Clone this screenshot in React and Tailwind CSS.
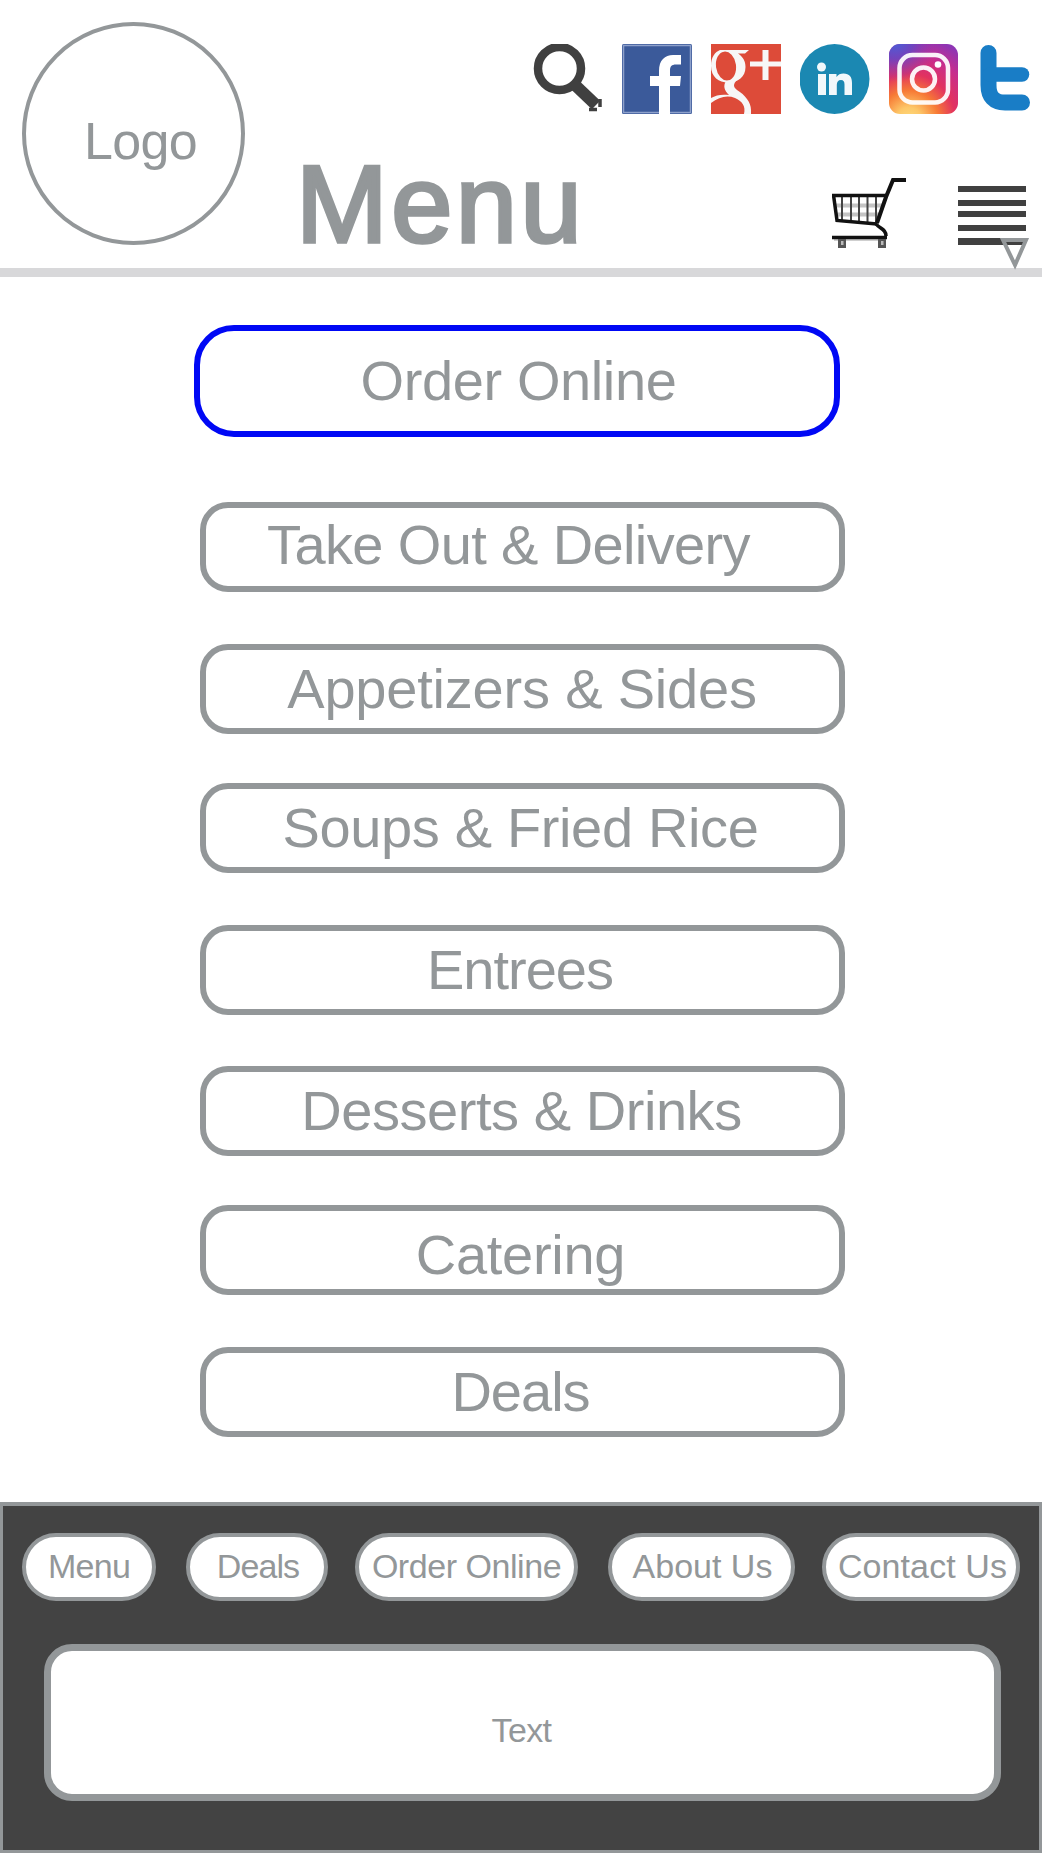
import clsx from "clsx";

const menuItems = [
  { label: "Take Out & Delivery", box: "mt-[65px]", text: "-translate-x-[14px] -translate-y-[2px] tracking-[-0.63px]" },
  { label: "Appetizers & Sides", box: "mt-[52px]", text: "-translate-x-[0.5px] tracking-[-0.2px]" },
  { label: "Soups & Fried Rice", box: "mt-[49px]", text: "-translate-x-[2px] tracking-[-0.35px]" },
  { label: "Entrees", box: "mt-[52px]", text: "-translate-x-[2.5px] tracking-[-1px]" },
  { label: "Desserts & Drinks", box: "mt-[51px]", text: "-translate-x-px tracking-[-0.45px]" },
  { label: "Catering", box: "mt-[49px]", text: "-translate-x-[2px] translate-y-[5px] tracking-[-0.3px]" },
  { label: "Deals", box: "mt-[52px]", text: "-translate-x-[2px] tracking-[-1px]" },
];

const footerLinks = [
  { label: "Menu", box: "w-[134px]", text: "tracking-[-0.7px]" },
  { label: "Deals", box: "ml-[30px] w-[142px]", text: "translate-x-px tracking-[-0.9px]" },
  { label: "Order Online", box: "ml-[27px] w-[223px]", text: "tracking-[-0.45px]" },
  { label: "About Us", box: "ml-[30px] w-[187px]", text: "translate-x-px" },
  { label: "Contact Us", box: "ml-[27px] w-[198px]", text: "translate-x-[1.5px] tracking-[0.1px]" },
];

function SearchIcon() {
  return (
    <svg viewBox="0 0 70 70" className="size-[70px]" fill="none" stroke="#404040">
      <circle cx="26.5" cy="24.5" r="21.5" strokeWidth="8.5" />
      <path d="M42 41 L63 61" strokeWidth="12" />
      <path d="M56 65.5 h8 M67 55 v8" strokeWidth="3.5" />
    </svg>
  );
}

function FacebookIcon() {
  return (
    <svg viewBox="0 0 70 70" className="size-[70px]">
      <rect width="70" height="70" rx="1.5" fill="#3b5a9a" />
      <rect x="1.5" y="1.5" width="67" height="67" fill="none" stroke="#8ea1cb" strokeWidth="1.5" />
      <path
        d="M37 70 V42 H28 V32 H37 V27 C37 16 43 11 51 11 H59 V20.5 H54 C49.500 20.500 48 22.500 48 26.500 V32 H59 L58 42 H48 V70 Z"
        fill="#fff"
      />
    </svg>
  );
}

function GooglePlusIcon() {
  return (
    <svg viewBox="0 0 70 70" className="size-[70px]">
      <rect width="70" height="70" fill="#dd4b39" />
      <g fill="#f7f7f7">
        <path d="M9 6 H38 L34 9.500 H27 C32 13 34.500 17 34.500 23 C34.500 33 27 38.500 17 38.500 C8 38.500 0 33 0 22 C0 13 4 8 9 6 Z" />
        <path d="M15 37 L26 36 C22 40 22 43 26 46 C34 51 40 58 40 66 V70 H33 C35 62 31 57 24 54 C16 51 8 53 0 59 V54 C5 51 11 50 18 51 C13 46 12 42 15 37 Z" />
        <rect x="39" y="17.500" width="31" height="5" />
        <rect x="51.500" y="6" width="6" height="30" />
      </g>
      <ellipse cx="15" cy="22" rx="10" ry="14.500" fill="#dd4b39" transform="rotate(-8 15 22)" />
    </svg>
  );
}

function LinkedInIcon() {
  return (
    <svg viewBox="0 0 70 70" className="size-[70px]">
      <circle cx="34.500" cy="35" r="35" fill="#1b88b2" />
      <g fill="#f2f8fb">
        <circle cx="21.500" cy="23" r="4.500" />
        <rect x="18" y="30" width="8" height="21" />
        <path d="M29 30 H36.500 V33 C38 30.500 40.500 29.500 43.500 29.500 C49.500 29.500 52 33 52 39 V51 H44.500 V40.500 C44.500 37.500 43.500 36 41 36 C38 36 36.800 38 36.800 41 V51 H29 Z" />
      </g>
    </svg>
  );
}

function InstagramIcon() {
  return (
    <svg viewBox="0 0 70 70" className="size-[70px]">
      <defs>
        <radialGradient id="igWarm" gradientUnits="userSpaceOnUse" cx="20" cy="76" r="84">
          <stop offset="0" stopColor="#fedb7c" />
          <stop offset="0.15" stopColor="#fdc768" />
          <stop offset="0.35" stopColor="#f77a35" />
          <stop offset="0.55" stopColor="#e2325f" />
          <stop offset="0.78" stopColor="#c72d8e" />
          <stop offset="1" stopColor="#8e35b4" />
        </radialGradient>
        <radialGradient id="igCool" gradientUnits="userSpaceOnUse" cx="6" cy="-4" r="42">
          <stop offset="0" stopColor="#4563db" />
          <stop offset="0.45" stopColor="#6547c4" stopOpacity="0.85" />
          <stop offset="1" stopColor="#8a36b4" stopOpacity="0" />
        </radialGradient>
      </defs>
      <rect width="69" height="70" rx="11" fill="url(#igWarm)" />
      <rect width="69" height="70" rx="11" fill="url(#igCool)" />
      <g fill="none" stroke="#fff" strokeWidth="4.500" strokeOpacity="0.93">
        <rect x="10.500" y="11" width="48.500" height="47.500" rx="13" />
        <circle cx="34.500" cy="35" r="11.500" />
      </g>
      <circle cx="49" cy="20.500" r="3.300" fill="#fff" />
    </svg>
  );
}

function TwitterIcon() {
  return (
    <svg
      viewBox="0 0 52 70"
      className="h-[70px] w-[52px]"
      fill="none"
      stroke="#197dc6"
      strokeWidth="16"
      strokeLinecap="round"
    >
      <path d="M10.500 9 V41 Q10.500 58.500 27 58.500 H44" />
      <path d="M12 30.500 H44" strokeWidth="14.500" />
    </svg>
  );
}

function CartIcon() {
  return (
    <svg viewBox="0 0 74 71" className="h-[71px] w-[74px]" fill="none" stroke="#111">
      <path d="M3 28.500 H51 M4 37.500 H48" stroke="#c4c4c4" strokeWidth="4" />
      <path d="M10 19 V44 M19 19 V45 M27 19 V45 M35.500 19 V46 M44 19 V46" stroke="#444" strokeWidth="2" />
      <path d="M74 3 H61 L54 20 L45 46" strokeWidth="4" />
      <path d="M0 18.500 H56" strokeWidth="3.5" />
      <path d="M1.500 18 L5 43.500 L45 47" strokeWidth="3.5" />
      <path d="M44 47 C48 52 54 52 54 59" strokeWidth="3.5" />
      <path d="M2 63 H53" stroke="#cfcfcf" strokeWidth="2" />
      <path d="M0 60.500 H55" strokeWidth="3.5" />
      <g stroke="none">
        <rect x="6" y="62" width="8" height="9" fill="#555" />
        <rect x="46" y="62" width="8" height="9" fill="#555" />
        <rect x="9" y="64" width="2.500" height="4" fill="#bbb" />
        <rect x="49" y="64" width="2.500" height="4" fill="#bbb" />
      </g>
    </svg>
  );
}

function HamburgerButton() {
  return (
    <button className="relative h-[59px] w-[68px]">
      <span className="block h-1.5 bg-[#404040]" />
      <span className="mt-2 block h-1.5 bg-[#404040]" />
      <span className="mt-[5px] block h-1.5 bg-[#404040]" />
      <span className="mt-2 block h-1.5 bg-[#404040]" />
      <span className="mt-[7px] block h-[7px] bg-[#404040]" />
      {/* dropdown arrow sits over the last bar */}
      <svg
        viewBox="0 0 30 32"
        className="absolute top-[52px] left-[42px] h-8 w-[30px]"
        fill="none"
        stroke="#939799"
        strokeWidth="4"
      >
        <path d="M3 2 H26 L15 27 Z" />
      </svg>
    </button>
  );
}

function Header() {
  return (
    <header className="flex h-[277px] border-b-[9px] border-[#d8d8da]">
      <div className="mt-[22px] ml-[22px] flex size-[223px] shrink-0 items-center justify-center rounded-full border-4 border-[#939799]">
        <span className="translate-x-[7px] translate-y-[7px] text-[52px] leading-none tracking-[-0.7px]">
          Logo
        </span>
      </div>
      <div className="min-w-0 flex-1">
        <div className="mt-[44px] flex gap-[19px] pl-[288px]">
          <SearchIcon />
          <FacebookIcon />
          <GooglePlusIcon />
          <LinkedInIcon />
          <InstagramIcon />
          <TwitterIcon />
        </div>
        <div className="flex items-start pr-4">
          <h1 className="mt-[35px] ml-[51px] text-[110px] leading-none tracking-[3.5px] [-webkit-text-stroke:3.5px_#939799]">
            Menu
          </h1>
          <div className="mt-[63px] mr-[52px] ml-auto">
            <CartIcon />
          </div>
          <div className="mt-[72px]">
            <HamburgerButton />
          </div>
        </div>
      </div>
    </header>
  );
}

function Footer() {
  return (
    <footer className="mt-[65px] h-[351px] border-[3px] border-t-4 border-[#939799] bg-[#434343]">
      <nav className="mt-[27px] ml-[19px] flex">
        {footerLinks.map((link) => (
          <a
            key={link.label}
            className={clsx(
              "flex h-[68px] shrink-0 items-center justify-center rounded-full border-4 border-[#939799] bg-white",
              link.box
            )}
          >
            <span className={clsx("-translate-y-px text-[34px] leading-none whitespace-nowrap", link.text)}>
              {link.label}
            </span>
          </a>
        ))}
      </nav>
      <div className="mt-[43px] ml-[41px] flex h-[157px] w-[957px] items-center justify-center rounded-[28px] border-[7px] border-[#939799] bg-white">
        <span className="-translate-x-px translate-y-[7px] text-[34px] leading-none tracking-[-0.6px]">
          Text
        </span>
      </div>
    </footer>
  );
}

export default function App() {
  return (
    <div className="h-[1853px] w-[1042px] overflow-hidden bg-white font-['Liberation_Sans',Arial,sans-serif] text-[#939799]">
      <Header />
      <main className="pt-12">
        <a className="ml-[194px] flex h-[112px] w-[646px] items-center justify-center rounded-[40px] border-[6.5px] border-[#0008f5]">
          <span className="translate-x-[1.5px] text-[56px] leading-none tracking-[-0.4px]">
            Order Online
          </span>
        </a>
        {menuItems.map((item) => (
          <a
            key={item.label}
            className={clsx(
              "ml-[200px] flex h-[90px] w-[645px] items-center justify-center rounded-[28px] border-[6px] border-[#939799]",
              item.box
            )}
          >
            <span className={clsx("text-[56px] leading-none whitespace-nowrap", item.text)}>
              {item.label}
            </span>
          </a>
        ))}
      </main>
      <Footer />
    </div>
  );
}
